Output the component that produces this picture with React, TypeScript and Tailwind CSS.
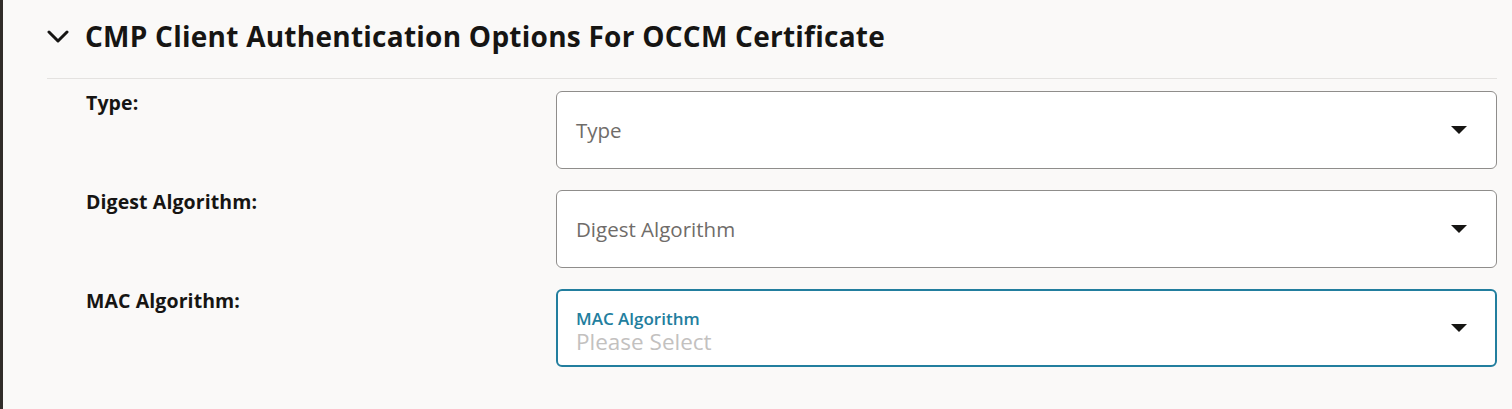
type Field = {
  label: string;
  placeholder: string;
  focused?: boolean;
};

const fields: Field[] = [
  { label: 'Type:', placeholder: 'Type' },
  { label: 'Digest Algorithm:', placeholder: 'Digest Algorithm' },
  { label: 'MAC Algorithm:', placeholder: 'MAC Algorithm', focused: true },
];

function Caret() {
  return (
    <svg width="16" height="8" viewBox="0 0 16 8" className="shrink-0">
      <path d="M0 0 L16 0 L8 8 Z" fill="#161513" />
    </svg>
  );
}

function Chevron() {
  return (
    <svg width="22" height="13" viewBox="0 0 22 13" className="shrink-0">
      <path d="M2 2 L11 11 L20 2" fill="none" stroke="#161513" strokeWidth="3" strokeLinecap="round" strokeLinejoin="round" />
    </svg>
  );
}

function SelectBox({ field }: { field: Field }) {
  if (field.focused) {
    return (
      <div className="h-[78px] flex items-center justify-between rounded-md border-2 border-[#227e9e] bg-white pl-[18px] pr-[28px]">
        <div className="flex flex-col pt-[6px]">
          <span className="text-[17px] leading-[21px] font-semibold text-[#227e9e]">
            {field.placeholder}
          </span>
          <span className="text-[22.5px] leading-[25px] text-[#c3c1bf]">Please Select</span>
        </div>
        <Caret />
      </div>
    );
  }
  return (
    <div className="h-[78px] flex items-center justify-between rounded-md border border-[#8f8d8b] bg-white pl-[19px] pr-[29px]">
      <span className="text-[20.5px] text-[#6f6c69]">{field.placeholder}</span>
      <Caret />
    </div>
  );
}

export default function App() {
  return (
    <div
      className="w-[1512px] h-[409px] flex bg-[#faf9f8] text-[#161513]"
      style={{ fontFamily: '"Segoe UI", "Open Sans", sans-serif' }}
    >
      <div className="w-[3px] bg-[#312d2a]" />
      <div className="flex-1 pl-[44px] pr-[15px]">
        <div className="h-[79px] flex items-center gap-[16px] border-b border-[#e4e2e0] pb-[6px]">
          <Chevron />
          <h2 className="text-[28px] font-bold tracking-[0.25px]">
            CMP Client Authentication Options For OCCM Certificate
          </h2>
        </div>
        <div className="flex flex-col gap-[21px] pt-[12px]">
          {fields.map((f) => (
            <div key={f.label} className="flex">
              <div className="w-[509px] pl-[39px] pt-[2px] text-[19.5px] leading-[20px] font-bold tracking-[0.1px]">
                {f.label}
              </div>
              <div className="flex-1">
                <SelectBox field={f} />
              </div>
            </div>
          ))}
        </div>
      </div>
    </div>
  );
}
